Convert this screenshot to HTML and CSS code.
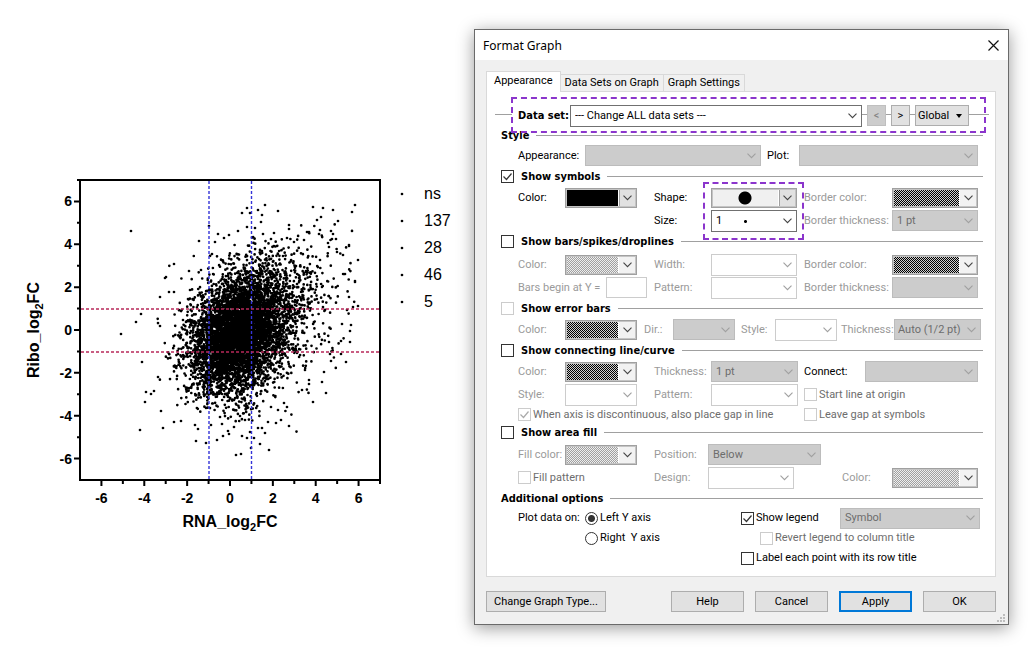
FILE: index.html
```html
<!DOCTYPE html>
<html lang="en">
<head>
<meta charset="utf-8">
<title>Format Graph</title>
<link rel="stylesheet" href="styles.css">
</head>
<body>
<main class="page">
  <section class="graph" aria-label="Scatter plot">
    <svg class="plot" viewBox="0 0 474 620">
      <path id="cloud" class="dots"/>
      <g class="guides">
        <path class="blue" d="M209 181V480M251.500 181V480"/>
        <path class="red" d="M81 309H380M81 352H380"/>
      </g>
      <rect class="frame" x="80" y="180" width="300" height="300"/>
      <path id="ticks" class="ticks"/>
      <g id="labels" class="tick-label"></g>
      <text class="axis-title" x="230" y="527" text-anchor="middle">RNA_log<tspan class="sub" dy="4">2</tspan><tspan dy="-4">FC</tspan></text>
      <text class="axis-title" transform="translate(39 330) rotate(-90)" text-anchor="middle">Ribo_log<tspan class="sub" dy="4">2</tspan><tspan dy="-4">FC</tspan></text>
      <path class="dots" d="M402 194h0M402 221h0M402 248h0M402 275h0M402 302h0"/>
      <g class="legend">
        <text x="424" y="199">ns</text>
        <text x="424" y="226">137</text>
        <text x="424" y="253">28</text>
        <text x="424" y="280">46</text>
        <text x="424" y="307">5</text>
      </g>
    </svg>
  </section>

  <section class="dialog" role="dialog" aria-labelledby="dlg-title">
    <header class="titlebar">
      <h1 id="dlg-title" class="title">Format Graph</h1>
      <button class="close" aria-label="Close"><svg width="11" height="11" viewBox="0 0 11 11"><path d="M.5.5l10 10M10.500.5l-10 10" stroke="#111" stroke-width="1.200" fill="none"/></svg></button>
    </header>
    <div class="body">
      <div class="tabs" role="tablist">
        <button class="tab active" role="tab" aria-selected="true">Appearance</button>
        <button class="tab" role="tab">Data Sets on Graph</button>
        <button class="tab last" role="tab">Graph Settings</button>
      </div>
      <form class="panel">
        <div class="dataset">
          <label class="dataset-label" for="ds">Data set:</label>
          <select id="ds" class="combo strong grow"><option>--- Change ALL data sets ---</option></select>
          <button type="button" class="btn step" disabled>&lt;</button>
          <button type="button" class="btn step">&gt;</button>
          <button type="button" class="btn global">Global<span class="tri"></span></button>
          <span class="highlight wide"></span>
        </div>

        <h2 class="head short">Style</h2>
        <div class="row style-row">
          <div class="field pad6"><label class="w67" for="ap">Appearance:</label><select id="ap" class="combo" disabled></select></div>
          <div class="field"><label class="w32" for="pl">Plot:</label><select id="pl" class="combo" disabled></select></div>
        </div>

        <h2 class="head"><label><input type="checkbox" checked>Show symbols</label></h2>
        <div class="row three">
          <div class="field pad17"><label class="w47" for="c1">Color:</label><select id="c1" class="swatch solid"></select></div>
          <div class="field pad7"><label class="w57" for="sh">Shape:</label><span class="marked"><select id="sh" class="swatch shape"></select><span class="highlight tall"></span></span></div>
          <div class="field off"><label class="w88" for="bc1">Border color:</label><select id="bc1" class="swatch dark" disabled></select></div>
        </div>
        <div class="row three">
          <div></div>
          <div class="field pad7"><label class="w57" for="sz">Size:</label><select id="sz" class="combo strong size"><option>1</option></select></div>
          <div class="field off"><label class="w88" for="bt1">Border thickness:</label><select id="bt1" class="combo" disabled><option>1 pt</option></select></div>
        </div>

        <h2 class="head roomy"><label><input type="checkbox">Show bars/spikes/droplines</label></h2>
        <div class="row three">
          <div class="field pad17 off"><label class="w47" for="c2">Color:</label><select id="c2" class="swatch light" disabled></select></div>
          <div class="field pad7 off"><label class="w57" for="wd">Width:</label><select id="wd" class="combo blank" disabled></select></div>
          <div class="field off"><label class="w88" for="bc2">Border color:</label><select id="bc2" class="swatch dark" disabled></select></div>
        </div>
        <div class="row three">
          <div class="field pad7 off"><label class="w88" for="by">Bars begin at Y =</label><input id="by" type="text" class="textbox" disabled></div>
          <div class="field pad7 off"><label class="w57" for="pt1">Pattern:</label><select id="pt1" class="combo blank" disabled></select></div>
          <div class="field off"><label class="w88" for="bt2">Border thickness:</label><select id="bt2" class="combo" disabled></select></div>
        </div>

        <h2 class="head"><label><input type="checkbox" disabled>Show error bars</label></h2>
        <div class="row error-row">
          <div class="field pad7 off"><label class="w47" for="c3">Color:</label><select id="c3" class="swatch dark" disabled></select></div>
          <div class="field pad6 off"><label class="w29" for="dir">Dir.:</label><select id="dir" class="combo" disabled></select></div>
          <div class="field pad4 off"><label class="w34" for="st1">Style:</label><select id="st1" class="combo blank" disabled></select></div>
          <div class="field off"><label class="w53" for="th1">Thickness:</label><select id="th1" class="combo slim" disabled><option>Auto (1/2 pt)</option></select></div>
        </div>

        <h2 class="head"><label><input type="checkbox">Show connecting line/curve</label></h2>
        <div class="row three">
          <div class="field pad17 off"><label class="w47" for="c4">Color:</label><select id="c4" class="swatch dark" disabled></select></div>
          <div class="field pad6 off"><label class="w57" for="th2">Thickness:</label><select id="th2" class="combo" disabled><option>1 pt</option></select></div>
          <div class="field"><label class="w61" for="cn">Connect:</label><select id="cn" class="combo" disabled></select></div>
        </div>
        <div class="row three">
          <div class="field pad17 off"><label class="w47" for="st2">Style:</label><select id="st2" class="combo blank" disabled></select></div>
          <div class="field pad6 off"><label class="w57" for="pt2">Pattern:</label><select id="pt2" class="combo blank" disabled></select></div>
          <label class="check off-text"><input type="checkbox" disabled>Start line at origin</label>
        </div>
        <div class="row gap-row">
          <label class="check off-text"><input type="checkbox" checked disabled>When axis is discontinuous, also place gap in line</label>
          <label class="check off-text"><input type="checkbox" disabled>Leave gap at symbols</label>
        </div>

        <h2 class="head"><label><input type="checkbox">Show area fill</label></h2>
        <div class="row fill-row">
          <div class="field pad17 off"><label class="w47" for="c5">Fill color:</label><select id="c5" class="swatch light" disabled></select></div>
          <div class="field off"><label class="w54" for="ps">Position:</label><select id="ps" class="combo" disabled><option>Below</option></select></div>
        </div>
        <div class="row design-row">
          <label class="check off-text"><input type="checkbox" disabled>Fill pattern</label>
          <div class="field pad48 off"><label class="w54" for="de">Design:</label><select id="de" class="combo blank" disabled></select></div>
          <div class="field off"><label class="w50" for="c6">Color:</label><select id="c6" class="swatch light" disabled></select></div>
        </div>

        <h2 class="head">Additional options</h2>
        <div class="options">
          <div class="axis-choice" role="radiogroup" aria-labelledby="pdo">
            <span id="pdo" class="w67 line">Plot data on:</span>
            <div>
              <label class="check line"><input type="radio" name="axis" checked>Left Y axis</label>
              <label class="check line"><input type="radio" name="axis">Right&nbsp; Y axis</label>
            </div>
          </div>
          <div>
            <div class="legend-line line">
              <label class="check"><input type="checkbox" checked>Show legend</label>
              <select class="combo" aria-label="Legend shows" disabled><option>Symbol</option></select>
            </div>
            <label class="check line indent off-text"><input type="checkbox" disabled>Revert legend to column title</label>
            <label class="check line"><input type="checkbox">Label each point with its row title</label>
          </div>
        </div>
      </form>
      <footer class="actions">
        <button class="btn type">Change Graph Type...</button>
        <button class="btn">Help</button>
        <button class="btn">Cancel</button>
        <button class="btn primary">Apply</button>
        <button class="btn">OK</button>
      </footer>
    </div>
    <svg class="grip" width="9" height="9" viewBox="0 0 9 9"><path d="M6 0h2v2h-2zM3 3h2v2h-2zM6 3h2v2h-2zM0 6h2v2h-2zM3 6h2v2h-2zM6 6h2v2h-2z" fill="#bdbdbd"/></svg>
  </section>
</main>
<script src="plot.js"></script>
</body>
</html>
```

FILE: styles.css
```css
* { box-sizing: border-box; }
body {
  margin: 0;
  background: #fff;
  color: #000;
  font: 11px/14px Roboto, "Noto Sans", sans-serif;
}
button, select, input { font: inherit; color: inherit; margin: 0; }
.page {
  display: grid;
  grid-template-columns: minmax(0, 474fr) minmax(0, 535fr);
  align-items: start;
  padding: 0 24px 26px 0;
}

/* scatter plot */
.plot { display: block; width: 100%; font-family: "Liberation Sans", Arial, sans-serif; }
.dots { fill: none; stroke: #000; stroke-width: 2.700; stroke-linecap: round; }
.frame { fill: none; stroke: #000; stroke-width: 2; }
.ticks { fill: none; stroke: #000; stroke-width: 2; }
.guides path { fill: none; stroke-width: 1.400; stroke-dasharray: 3 2; }
.guides .blue { stroke: #3434d8; }
.guides .red { stroke: #b8285a; }
.tick-label { font-size: 14px; font-weight: bold; }
.axis-title { font-size: 16px; font-weight: bold; }
.sub { font-size: 11px; }
.legend { font-size: 16px; }

/* dialog window */
.dialog {
  position: relative;
  margin-top: 29px;
  background: #f0f0f0;
  border: 1px solid #6a6a6a;
  box-shadow: 0 3px 16px rgba(0, 0, 0, .4);
}
.titlebar {
  display: flex;
  align-items: center;
  justify-content: space-between;
  height: 30px;
  padding: 0 9px 0 8px;
  background: #fff;
}
.title { margin: 0; font: 12px "Noto Sans", sans-serif; }
.close { display: flex; padding: 0; border: 0; background: none; }
.body { padding: 11px 12px 12px 11px; }
.tabs { display: flex; align-items: flex-end; height: 20px; }
.tab {
  height: 17px;
  padding: 0 4px;
  border: 1px solid #d9d9d9;
  border-left: 0;
  border-bottom: 0;
  background: #f0f0f0;
  white-space: nowrap;
}
.tab.active {
  position: relative;
  height: 21px;
  margin-bottom: -1px;
  padding: 0 7px 2px;
  border-left: 1px solid #d9d9d9;
  background: #fff;
}
.panel {
  padding: 12px 12px 8px 14px;
  border: 1px solid #d9d9d9;
  background: #fff;
}

/* data set bar, with a rule running behind its controls */
.dataset {
  position: relative;
  display: flex;
  align-items: center;
  gap: 5px;
  height: 23px;
  margin: 0 -6px;
  padding: 0 20px 0 17px;
  background: linear-gradient(#a0a0a0, #a0a0a0) 0 10px / 100% 1px no-repeat;
}
.dataset-label {
  width: 58px;
  margin-right: -5px;
  padding-left: 6px;
  background: #fff;
  font-family: "DejaVu Sans Condensed", "DejaVu Sans", sans-serif;
  font-weight: bold;
  white-space: nowrap;
}
.highlight { position: absolute; border: 2px dashed #8b35cc; pointer-events: none; }
.wide { inset: -7px 3px -6px 16px; }
.tall { inset: -6px -7px -32px -8px; z-index: 1; }

/* section headings */
.head {
  display: flex;
  align-items: center;
  gap: 7px;
  height: 19px;
  margin: 0;
  font: bold 11px "DejaVu Sans Condensed", "DejaVu Sans", sans-serif;
  white-space: nowrap;
}
.head::after { content: ""; flex: 1; height: 1px; background: #a0a0a0; }
.head label { display: flex; align-items: center; gap: 7px; }
.short { height: 17px; }
.roomy { margin-bottom: 2px; }

/* rows of fields */
.row { display: grid; align-items: center; min-height: 23px; padding: 0 5px 0 17px; }
.three { grid-template-columns: 136fr 150fr 174fr; }
.style-row { grid-template-columns: 249fr 211fr; }
.error-row { grid-template-columns: 126fr 97fr 100fr 140fr; padding-right: 2px; }
.gap-row { grid-template-columns: 286fr 174fr; min-height: 17px; }
.fill-row { grid-template-columns: 136fr 167fr 157fr; margin-top: 1px; }
.design-row { grid-template-columns: 136fr 188fr 136fr; }
.field { display: flex; align-items: center; min-width: 0; white-space: nowrap; }
.field > label { flex: none; }
.off { color: #9a9a9a; }
.off-text { color: #6d6d6d; }
.pad4 { padding-right: 4px; }
.pad6 { padding-right: 6px; }
.pad7 { padding-right: 7px; }
.pad17 { padding-right: 17px; }
.pad48 { padding-right: 48px; }
.w29 { width: 29px; }
.w32 { width: 32px; }
.w34 { width: 34px; }
.w47 { width: 47px; }
.w50 { width: 50px; }
.w53 { width: 53px; }
.w54 { width: 54px; }
.w57 { width: 57px; }
.w61 { width: 61px; }
.w67 { width: 67px; }
.w88 { width: 88px; }
.marked { position: relative; display: flex; flex: 1; min-width: 0; }

/* drop-downs */
.combo, .swatch {
  flex: 1;
  width: 0;
  min-width: 0;
  height: 21px;
  padding: 0 16px 0 4px;
  border: 1px solid #bcbcbc;
  border-radius: 0;
  appearance: none;
  opacity: 1;
  --arrow: url("data:image/svg+xml,%3Csvg xmlns='http://www.w3.org/2000/svg' width='9' height='6'%3E%3Cpath d='M.5.7l4 4 4-4' fill='none' stroke='%23444' stroke-width='1.100'/%3E%3C/svg%3E");
  --faint: url("data:image/svg+xml,%3Csvg xmlns='http://www.w3.org/2000/svg' width='9' height='6'%3E%3Cpath d='M.5.7l4 4 4-4' fill='none' stroke='%23a0a0a0' stroke-width='1.100'/%3E%3C/svg%3E");
}
.combo { background: var(--faint) right 4px center no-repeat #ccc; color: #6d6d6d; }
.combo.slim { padding: 0 0 0 3px; }
.combo.blank { height: 22px; border-color: #ccc; background-color: #fff; }
.combo.strong { height: 22px; border-color: #707070; background-color: #fff; background-image: var(--arrow); color: #000; }
.combo.size {
  background:
    var(--arrow) right 4px center no-repeat,
    radial-gradient(circle, #000 1px, transparent 2px) 31px 8px / 5px 5px no-repeat,
    #fff;
}
.swatch {
  border: 1px solid #a0a0a0;
  background:
    var(--arrow) right 4px center / 9px 6px no-repeat,
    linear-gradient(#a0a0a0, #a0a0a0) right 16px center / 1px 100% no-repeat,
    linear-gradient(#e1e1e1, #e1e1e1) right / 16px 100% no-repeat,
    var(--fill) #fff;
  background-clip: border-box, border-box, border-box, content-box;
  padding: 1px 18px 1px 1px;
  outline: 1px solid #c4c4c4;
  outline-offset: -2px;
  height: 20px;
}
.swatch:disabled {
  background:
    var(--arrow) right 4px center / 9px 6px no-repeat,
    linear-gradient(#f2f2f2, #f2f2f2) right / 17px 100% no-repeat,
    var(--fill);
  background-clip: border-box, border-box, content-box;
}
.solid { --fill: linear-gradient(#000, #000); }
.shape { --fill: radial-gradient(circle at 33px 9px, #000 6px, #f0f0f0 7px); }
.dark { --fill: repeating-conic-gradient(#000 0 25%, #d0d0d0 0 50%) 0 0 / 2px 2px; }
.light { --fill: repeating-conic-gradient(#a0a0a0 0 25%, #eee 0 50%) 0 0 / 2px 2px; }
.textbox { flex: 1; width: 0; min-width: 0; height: 21px; border: 1px solid #ccc; background: #fff; }

/* check boxes and radio buttons */
input[type="checkbox"], input[type="radio"] {
  flex: none;
  width: 13px;
  height: 13px;
  border: 1px solid #333;
  background: #fff;
  appearance: none;
}
input[type="radio"] { border-radius: 50%; }
input[type="checkbox"]:disabled { border-color: #ccc; }
input[type="checkbox"]:checked {
  background: url("data:image/svg+xml,%3Csvg xmlns='http://www.w3.org/2000/svg' width='11' height='11'%3E%3Cpath d='M1.500 5.500l3 3 5-6' fill='none' stroke='%23333' stroke-width='1.200'/%3E%3C/svg%3E") center no-repeat;
}
input[type="checkbox"]:checked:disabled {
  background-image: url("data:image/svg+xml,%3Csvg xmlns='http://www.w3.org/2000/svg' width='11' height='11'%3E%3Cpath d='M1.500 5.500l3 3 5-6' fill='none' stroke='%23aaa' stroke-width='1.200'/%3E%3C/svg%3E");
}
input[type="radio"]:checked { background: radial-gradient(circle, #333 3px, #fff 4px); }
.check { display: flex; align-items: center; gap: 2px; white-space: nowrap; }

/* additional options */
.options { display: grid; grid-template-columns: 223fr 239fr; padding: 0 3px 0 17px; }
.axis-choice { display: flex; }
.line { display: flex; align-items: center; height: 20px; }
.legend-line .check { width: 99px; }
.indent { padding-left: 19px; }

/* buttons */
.btn {
  width: 73px;
  height: 21px;
  padding: 0;
  border: 1px solid #adadad;
  background: #e1e1e1;
  white-space: nowrap;
}
.btn:disabled { border-color: #bfbfbf; background: #ccc; color: #838383; }
.step { width: 19px; }
.global { display: flex; align-items: center; gap: 7px; width: 54px; padding-left: 2px; }
.tri { border: 3px solid transparent; border-top: 4px solid #000; border-bottom: 0; }
.actions { display: flex; gap: 11px; padding-top: 14px; }
.type { width: 120px; margin-right: auto; }
.primary { border: 2px solid #0078d7; }
.grip { position: absolute; right: 2px; bottom: 1px; }
```

FILE: plot.js
```js
// Expression fold changes, drawn on axes where one unit is 150/7 px.
var UNIT = 150 / 7, CX = 230, CY = 330;
var seed = 20231;
function rnd() {
  seed = (seed * 1664525 + 1013904223) % 4294967296;
  return (seed + 1) / 4294967297;
}
function gauss() {
  return Math.sqrt(-2 * Math.log(rnd())) * Math.cos(6.283185 * rnd());
}
var d = '';
function dot(px, py) { d += 'M' + px.toFixed(1) + ' ' + py.toFixed(1) + 'h0'; }
function cluster(n, mx, my, sx, sy, r) {
  for (var i = 0; i < n; i++) {
    var a = gauss(), b = r * a + Math.sqrt(1 - r * r) * gauss();
    var x = mx + sx * a, y = my + sy * b;
    if (x > -3.4 && x < 5.9 && Math.abs(y) < 4.2 + x * 0.25) dot(CX + x * UNIT, CY - y * UNIT);
  }
}
cluster(5300, 0.4, -0.2, 1.13, 1.38, 0.3);
cluster(1200, 1.5, 0.7, 1.65, 1.6, 0.3);

// Scattered genes well outside the main cloud.
var far = [
  131,231,121,334,136,322,141,314,142,362,140,430,146,392,151,394,145,402,154,391,158,377,161,411,163,428,174,422,181,421,
  174,264,166,277,165,278,169,292,174,292,189,271,199,241,209,226,201,270,212,254,215,242,218,234,224,238,229,235,238,231,
  242,213,247,208,250,213,258,210,262,215,261,222,265,205,247,227,255,228,278,211,289,225,289,229,271,239,274,233,263,234,
  287,238,294,242,304,240,313,207,323,208,333,210,317,220,321,217,338,221,355,205,352,212,320,230,319,234,309,232,307,232,
  331,231,333,234,332,239,336,239,328,243,329,247,349,245,349,246,337,252,343,255,358,260,345,274,355,282,349,297,355,281,
  347,310,358,306,353,307,351,325,350,331,350,342,341,341,341,354,346,362,342,324,331,361,329,342,330,354,324,372,322,382,
  326,393,313,402,302,390,309,384,309,380,305,370,196,441,206,443,217,440,223,436,229,434,228,431,234,427,242,436,247,438,
  250,432,254,438,251,448,260,444,265,433,262,428,258,428,268,422,276,423,281,420,289,426,269,450,236,455,241,454,
  198,429,195,425,211,425,222,424,178,354,160,297,160,326,190,290,188,299,284,403,287,407,278,410,271,407,245,420,240,416
];
for (var k = 0; k < far.length; k += 2) dot(far[k], far[k + 1]);
document.getElementById('cloud').setAttribute('d', d);

// Major ticks on even values, minor ticks on odd ones.
var t = '', labels = '';
for (var v = -7; v <= 7; v++) {
  var x = CX + v * UNIT, y = CY - v * UNIT, major = v % 2 === 0;
  if (v > -7) t += 'M' + x + ' 480v' + (major ? 6 : 4);
  if (v > -7) t += 'M80 ' + y + 'h-' + (major ? 6 : 3);
  if (major) {
    labels += '<text x="' + x + '" y="503" text-anchor="middle">' + v + '</text>';
    labels += '<text x="72" y="' + (y + 5) + '" text-anchor="end">' + v + '</text>';
  }
}
document.getElementById('ticks').setAttribute('d', t);
document.getElementById('labels').innerHTML = labels;
```
